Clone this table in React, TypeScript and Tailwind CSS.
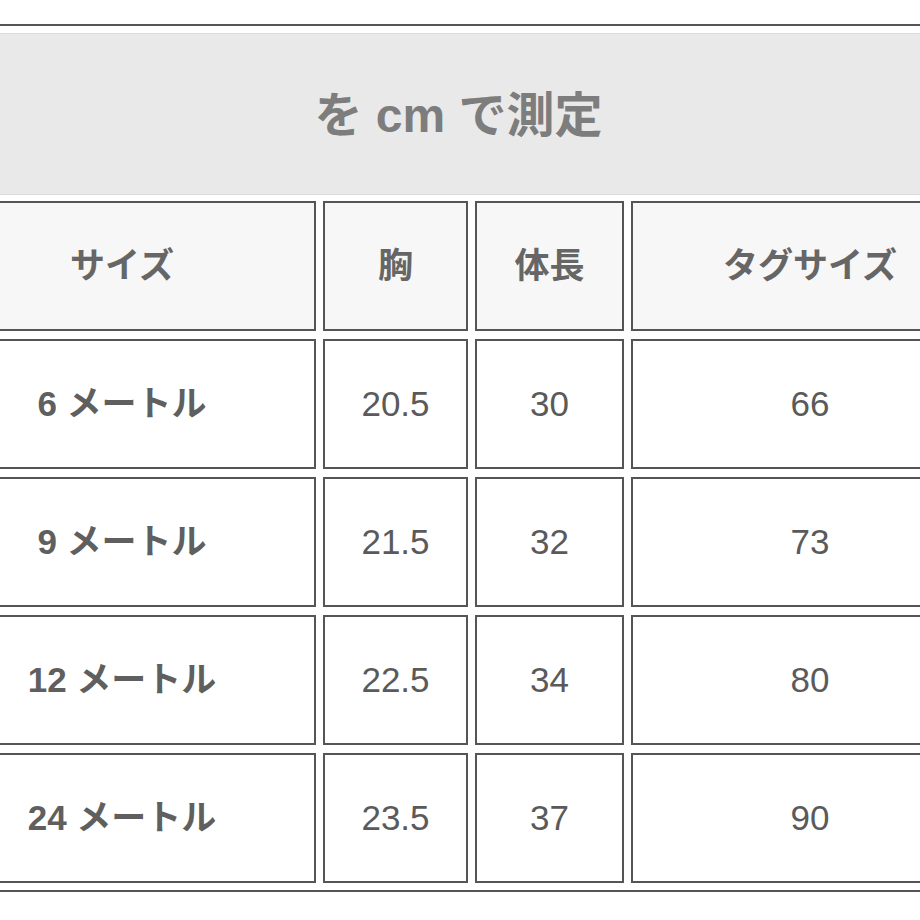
import React from 'react';

const headers = ['サイズ', '胸', '体長', 'タグサイズ'];

const rows = [
  ['6 メートル', '20.5', '30', '66'],
  ['9 メートル', '21.5', '32', '73'],
  ['12 メートル', '22.5', '34', '80'],
  ['24 メートル', '23.5', '37', '90'],
];

const font = { fontFamily: '"Liberation Sans", "Noto Sans CJK JP", sans-serif' };

const cell = 'h-[130px] border-2 border-[#555] flex items-center justify-center text-[35px]';

const App: React.FC = () => {
  return (
    <div className="w-[920px] h-[920px] overflow-hidden bg-white pt-[24px]" style={font}>
      <div className="ml-[-81px] w-[1079px] border-2 border-[#555] p-[7px] flex flex-col gap-[6px]">
        <div className="h-[162px] bg-[#e9e9e9] border-y border-[#dcdcdc] flex items-center justify-center pt-[4px]">
          <span className="text-[48px] font-bold text-[#7d7d7d]">を cm で測定</span>
        </div>

        <div className="grid grid-cols-[388px_145px_149px_358px] gap-x-[7px] gap-y-[8px]">
          {headers.map((h) => (
            <div key={h} className={`${cell} bg-[#f7f7f7] font-bold text-[#666]`}>
              {h}
            </div>
          ))}
          {rows.map((r) =>
            r.map((v, i) => (
              <div
                key={r[0] + i}
                className={`${cell} bg-white ${i === 0 ? 'font-bold text-[#5f5f5f]' : 'text-[#5a5a5a]'}`}
              >
                {v}
              </div>
            ))
          )}
        </div>
      </div>
    </div>
  );
};

export default App;
